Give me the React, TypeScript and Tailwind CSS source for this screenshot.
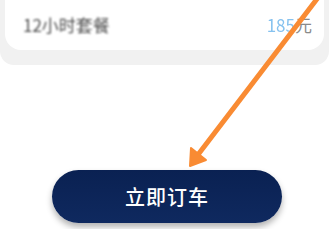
import React from 'react';

export default function App() {
  return (
    <div className="relative w-[331px] h-[229px] overflow-hidden bg-white font-['Noto_Sans_CJK_SC',sans-serif]">
      {/* package card */}
      <div className="mr-[2px] h-[65px] rounded-b-[14px] bg-[#f1f1f1] px-[5px] pb-[15px]">
        <div className="flex h-[50px] items-center justify-between rounded-b-[16px] bg-white pl-[18px] pr-[12px]">
          <span className="text-[17px] text-[#4e4e4e] blur-[0.8px]">12小时套餐</span>
          <span className="text-[17px]">
            <span className="text-[#86c2ef] blur-[0.6px]">185</span>
            <span className="text-[#8a8a8a]">元</span>
          </span>
        </div>
      </div>

      {/* order button */}
      <div className="mt-[105px] flex pl-[52px]">
        <button className="h-[53px] w-[230px] rounded-full bg-gradient-to-b from-[#0a2152] to-[#0f295f] text-[20px] font-medium tracking-[1px] text-white shadow-[0_4px_6px_rgba(0,0,0,0.3)]">
          立即订车
        </button>
      </div>

      {/* annotation arrow */}
      <svg className="pointer-events-none absolute inset-0" width="331" height="229" viewBox="0 0 331 229">
        <line x1="320" y1="-5" x2="197" y2="156" stroke="#f98b33" strokeWidth="5" strokeLinecap="round" />
        <polygon points="190,166 191,148 206,160" fill="#f98b33" stroke="#f98b33" strokeWidth="2" strokeLinejoin="round" />
      </svg>
    </div>
  );
}
